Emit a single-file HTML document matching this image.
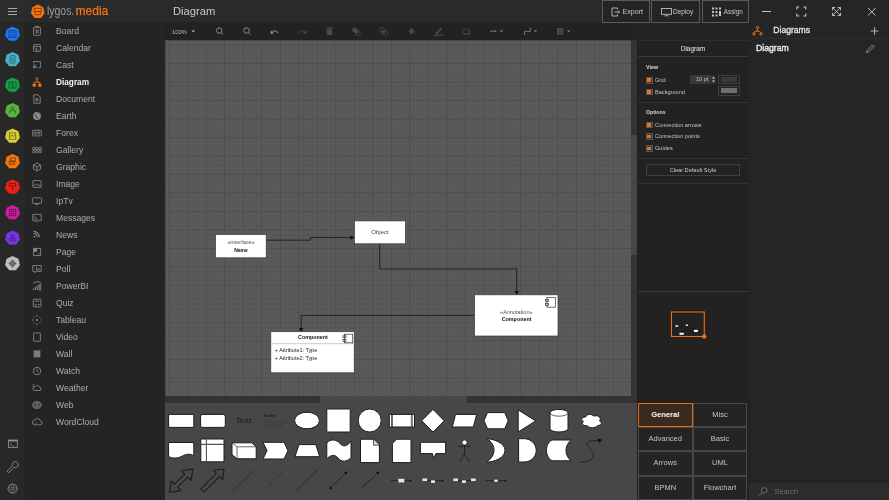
<!DOCTYPE html>
<html><head><meta charset="utf-8">
<style>
*{margin:0;padding:0;box-sizing:border-box}
html{-webkit-font-smoothing:antialiased}
html,body{width:889px;height:500px;overflow:hidden;background:#242424;font-family:"Liberation Sans",sans-serif;color:#bbb}
.a{position:absolute}
#hb{left:0;top:0;width:25px;height:22px;background:#2d2d2d}
#ib{left:0;top:22px;width:25px;height:478px;background:#282828}
#lh{left:25px;top:0;width:140px;height:22px;background:#2a2a2a}
#sb{left:25px;top:22px;width:140px;height:478px;background:#242424}
.logo{font-size:12px;line-height:14px;white-space:nowrap}
.nav{position:absolute;left:56px;font-size:8.6px;color:#adadad;line-height:13px;white-space:nowrap}
.nav.sel{color:#f4f4f4;font-weight:bold;font-size:8.25px}
#title{left:165px;top:0;width:437px;height:22px;background:#2a2a2a}
.title{left:173px;top:4.2px;font-size:11.2px;line-height:14px;color:#cbcbcb}
#tb{left:165px;top:22px;width:466px;height:18px;background:#222}
#canvas{left:165px;top:40px;width:466px;height:356px;background-color:#5a5a5a;
 background-image:linear-gradient(90deg,#4f4f4f 0,#4f4f4f 1px,transparent 1px),linear-gradient(180deg,#4f4f4f 0,#4f4f4f 1px,transparent 1px),linear-gradient(90deg,#565656 0,#565656 1px,transparent 1px),linear-gradient(180deg,#565656 0,#565656 1px,transparent 1px);
 background-size:18.51px 18.51px,18.51px 18.51px,4.6275px 4.6275px,4.6275px 4.6275px;
 background-position:3.9px 4.5px,3.9px 4.5px,3.9px 4.5px,3.9px 4.5px;box-shadow:inset 1px 1px 0 #4a4a4a}
#hscroll{left:165px;top:396px;width:466px;height:7px;background:#333}
#vscroll{left:631px;top:40px;width:7px;height:363px;background:#333}
#pal{left:165px;top:403px;width:473px;height:97px;background:#474747}
#props{left:637px;top:40px;width:112.5px;height:460px;background:#222}
#rp{left:749.5px;top:0;width:139.5px;height:500px;background:#252525}
.tbtn{position:absolute;top:0;height:22.5px;border:1.3px solid #5a5a5a;border-top-width:1px;color:#c8c8c8;line-height:19px;white-space:nowrap}
.pt{position:absolute;font-size:5.6px;line-height:8px;color:#c4c4c4;white-space:nowrap}
.tab{position:absolute;height:24.2px;border:1px solid #474747;background:#242424;font-size:7.5px;line-height:22.2px;text-align:center;color:#c4c4c4}
.ck{width:6.5px;height:6.5px;background:#3a3a3a;border:1px solid #555}
.ck::after{content:"";position:absolute;left:0.45px;top:0.45px;width:3.6px;height:3.6px;background:#f07014}

</style></head><body>
<div id="root" style="position:absolute;left:0;top:0;width:889px;height:500px;overflow:hidden;filter:blur(0.3px)">
<div class="a" id="hb"></div><div class="a" id="ib"></div><div class="a" id="lh"></div><div class="a" id="sb"></div><div class="a" id="title"></div><div class="a" id="tb"></div><div class="a" id="canvas"></div><div class="a" id="hscroll"><div class="a" style="left:155px;top:0;width:147px;height:7px;background:#474747"></div></div><div class="a" id="vscroll"><div class="a" style="left:0;top:95px;width:7px;height:120px;background:#474747"></div></div><div class="a" id="pal"></div><div class="a" id="props"></div><div class="a" id="rp"></div><svg class="a" style="left:0;top:0" width="25" height="500" viewBox="0 0 25 500"><rect x="8" y="8.0" width="9" height="1" fill="#a8a8a8"/><rect x="8" y="11.0" width="9" height="1" fill="#a8a8a8"/><rect x="8" y="14.0" width="9" height="1" fill="#a8a8a8"/><polygon points="12.50,26.40 18.44,29.26 19.91,35.69 15.80,40.85 9.20,40.85 5.09,35.69 6.56,29.26" fill="#2176f5"/><g transform="translate(0 34.0)" stroke="#173c86" fill="#173c86"><rect x="9" y="-3.3" width="7" height="6.6" fill="none" stroke-width="0.9"/><path d="M12.5 -3.3v6.6M10 -1.5h1.2M13.8 -1.5h1.2M10 0.3h1.2M13.8 0.3h1.2M10 2h1.2M13.8 2h1.2" stroke-width="0.7"/></g><polygon points="12.50,51.90 18.44,54.76 19.91,61.19 15.80,66.35 9.20,66.35 5.09,61.19 6.56,54.76" fill="#4cb0c6"/><g transform="translate(0 59.5)" stroke="#24687a" fill="#24687a"><rect x="10" y="-3.8" width="5" height="7.4" rx="1" fill="none" stroke-width="0.9"/><path d="M11.2 -1.6h2.6M11.2 0h2.6M11.2 1.6h2.6" stroke-width="0.7"/></g><polygon points="12.50,77.40 18.44,80.26 19.91,86.69 15.80,91.85 9.20,91.85 5.09,86.69 6.56,80.26" fill="#16a04a"/><g transform="translate(0 85.0)" stroke="#0c5a2a" fill="#0c5a2a"><rect x="9" y="-3" width="3.2" height="6" fill="none" stroke-width="0.9"/><rect x="12.8" y="-3" width="3.2" height="6" fill="none" stroke-width="0.9"/><path d="M10 -1h1.2M13.8 1h1.2" stroke-width="0.8"/></g><polygon points="12.50,102.90 18.44,105.76 19.91,112.19 15.80,117.35 9.20,117.35 5.09,112.19 6.56,105.76" fill="#58b43c"/><g transform="translate(0 110.5)" stroke="#2e6a1e" fill="#2e6a1e"><circle cx="12.5" cy="-2.2" r="1.3" fill="none" stroke-width="0.9"/><path d="M9.5 3v-1.6a3 2 0 0 1 6 0v1.6M9 1h1.5M14.5 1h1.5" fill="none" stroke-width="0.9"/></g><polygon points="12.50,128.40 18.44,131.26 19.91,137.69 15.80,142.85 9.20,142.85 5.09,137.69 6.56,131.26" fill="#d6cf35"/><g transform="translate(0 136.0)" stroke="#6e6a1a" fill="#6e6a1a"><rect x="9.3" y="-3.2" width="6.4" height="6.4" fill="none" stroke-width="0.8"/><path d="M10 1.5l2-2.5 1.5 1.5 2-2.5M10.5 -2l1.5 1.5" fill="none" stroke-width="0.8"/></g><polygon points="12.50,153.90 18.44,156.76 19.91,163.19 15.80,168.35 9.20,168.35 5.09,163.19 6.56,156.76" fill="#f2780f"/><g transform="translate(0 161.5)" stroke="#8a4008" fill="#8a4008"><rect x="10.5" y="-3.5" width="5" height="3.2" fill="none" stroke-width="0.9"/><rect x="9.3" y="-0.5" width="5" height="3.4" fill="none" stroke-width="0.9"/><path d="M10.3 1.2h3" stroke-width="0.7"/></g><polygon points="12.50,179.40 18.44,182.26 19.91,188.69 15.80,193.85 9.20,193.85 5.09,188.69 6.56,182.26" fill="#e8221a"/><g transform="translate(0 187.0)" stroke="#80120e" fill="#80120e"><rect x="9.4" y="-3.6" width="6.2" height="2.6" fill="none" stroke-width="0.9"/><path d="M12.5 -1v4.4" stroke-width="0.9"/></g><polygon points="12.50,204.90 18.44,207.76 19.91,214.19 15.80,219.35 9.20,219.35 5.09,214.19 6.56,207.76" fill="#cc1fa0"/><g transform="translate(0 212.5)" stroke="#6e1058" fill="#6e1058"><rect x="9.3" y="-3.2" width="6.4" height="6.4" fill="none" stroke-width="0.8"/><path d="M9.3 -1h6.4M9.3 1.1h6.4M11.4 -3.2v6.4M13.6 -3.2v6.4" stroke-width="0.6"/></g><polygon points="12.50,230.40 18.44,233.26 19.91,239.69 15.80,244.85 9.20,244.85 5.09,239.69 6.56,233.26" fill="#7436e0"/><g transform="translate(0 238.0)" stroke="#3c1a7a" fill="#3c1a7a"><circle cx="12.5" cy="-2" r="1.4" fill="none" stroke-width="0.8"/><circle cx="10.6" cy="1.6" r="1.4" fill="none" stroke-width="0.8"/><circle cx="14.4" cy="1.6" r="1.4" fill="none" stroke-width="0.8"/></g><polygon points="12.50,255.90 18.44,258.76 19.91,265.19 15.80,270.35 9.20,270.35 5.09,265.19 6.56,258.76" fill="#bdbdbd"/><g transform="translate(0 263.5)" stroke="#5a5a5a" fill="#5a5a5a"><path d="M12.5 -4.2l4.2 4.2-4.2 4.2-4.2-4.2z" stroke="none"/><path d="M12.5 -4.2l4.2 4.2-4.2 4.2-4.2-4.2zM10.4 -2.1l4.2 4.2M14.6 -2.1l-4.2 4.2" fill="none" stroke-width="0.5" stroke="#bdbdbd"/></g><rect x="8.5" y="440" width="8.8" height="7.6" fill="none" stroke="#8e8e8e" stroke-width="0.9"/><rect x="8.5" y="440" width="8.8" height="1.5" fill="#8e8e8e"/><path d="M10.3 443.2l1.5 1.2-1.5 1.2M12.3 446h2" stroke="#8e8e8e" stroke-width="0.8" fill="none"/><path d="M12.4 465.8a3 3 0 1 1 1.6 1.6l-5.3 5.3-1.6-1.6z" fill="none" stroke="#8e8e8e" stroke-width="0.9" stroke-linejoin="round"/><path d="M15.80 487.45 L17.22 487.72 L17.22 489.48 L15.80 489.75 L15.68 490.05 L16.49 491.24 L15.24 492.49 L14.05 491.68 L13.75 491.80 L13.48 493.22 L11.72 493.22 L11.45 491.80 L11.15 491.68 L9.96 492.49 L8.71 491.24 L9.52 490.05 L9.40 489.75 L7.98 489.48 L7.98 487.72 L9.40 487.45 L9.52 487.15 L8.71 485.96 L9.96 484.71 L11.15 485.52 L11.45 485.40 L11.72 483.98 L13.48 483.98 L13.75 485.40 L14.05 485.52 L15.24 484.71 L16.49 485.96 L15.68 487.15z" fill="none" stroke="#8e8e8e" stroke-width="0.9" stroke-linejoin="round"/><circle cx="12.6" cy="488.6" r="1.5" fill="none" stroke="#8e8e8e" stroke-width="0.9"/></svg><svg class="a" style="left:25px;top:0" width="20" height="22" viewBox="25 0 20 22"><polygon points="37.80,4.60 43.27,7.24 44.62,13.16 40.84,17.91 34.76,17.91 30.98,13.16 32.33,7.24" fill="#f07414"/><rect x="34.3" y="8.3" width="7" height="3.2" fill="none" stroke="#8a3d08" stroke-width="0.9"/><rect x="35.3" y="11.5" width="5" height="3.2" fill="none" stroke="#8a3d08" stroke-width="0.9"/></svg><div class="a logo" style="left:46.8px;top:3.5px;transform-origin:0 0;transform:scaleX(0.87);color:#9c9c9c">lygos.</div><div class="a logo" style="left:75.6px;top:3.5px;color:#f07414;-webkit-text-stroke:0.25px #f07414">media</div><div class="nav" style="top:24.5px">Board</div><div class="nav" style="top:41.5px">Calendar</div><div class="nav" style="top:58.5px">Cast</div><div class="nav sel" style="top:75.5px">Diagram</div><div class="nav" style="top:92.5px">Document</div><div class="nav" style="top:109.5px">Earth</div><div class="nav" style="top:126.5px">Forex</div><div class="nav" style="top:143.5px">Gallery</div><div class="nav" style="top:160.5px">Graphic</div><div class="nav" style="top:177.5px">Image</div><div class="nav" style="top:194.5px">IpTv</div><div class="nav" style="top:211.5px">Messages</div><div class="nav" style="top:228.5px">News</div><div class="nav" style="top:245.5px">Page</div><div class="nav" style="top:262.5px">Poll</div><div class="nav" style="top:279.5px">PowerBI</div><div class="nav" style="top:296.5px">Quiz</div><div class="nav" style="top:313.5px">Tableau</div><div class="nav" style="top:330.5px">Video</div><div class="nav" style="top:347.5px">Wall</div><div class="nav" style="top:364.5px">Watch</div><div class="nav" style="top:381.5px">Weather</div><div class="nav" style="top:398.5px">Web</div><div class="nav" style="top:415.5px">WordCloud</div><svg class="a" style="left:25px;top:22px" width="30" height="420" viewBox="25 22 30 420" fill="none" stroke="#8c8c8c" stroke-width="0.85" stroke-linejoin="round"><rect x="33.6" y="27.3" width="6.8" height="8" rx="0.7"/><rect x="35.4" y="29.3" width="3.2" height="4.2" fill="#8c8c8c" stroke="none" opacity="0.6"/><path d="M35.5 27.2v-0.8h3v0.8"/><rect x="33.6" y="44.6" width="6.8" height="6.8" rx="0.7"/><path d="M33.6 46.6h6.8"/><path d="M35 48.5h2M35 50h4" stroke-width="0.7"/><path d="M33.6 63.5v-2h6.8v6.3h-2"/><path d="M33.6 67.8h1.8c0-1-0.8-1.8-1.8-1.8z" fill="#8c8c8c"/><path d="M33.6 64.6c1.8 0 3.2 1.4 3.2 3.2"/><g stroke="#e0701a" stroke-width="1"><path d="M37 77.3l1.3 1.3-1.3 1.3-1.3-1.3z"/><circle cx="34.2" cy="85.2" r="1.4" fill="#e0701a"/><circle cx="39.8" cy="85.2" r="1.4" fill="#e0701a"/><path d="M37 79.9v2.3M34.2 83.8v-1.6h5.6v1.6"/></g><path d="M33.8 94.8h4.2l2.2 2.2v6.2h-6.4z"/><rect x="35.5" y="98" width="2.8" height="3.5" fill="#8c8c8c" stroke="none" opacity="0.7"/><circle cx="37" cy="116" r="3.9" fill="#8c8c8c" stroke="none"/><path d="M34.5 114.5c1 .3 1.8 1 2 2.2s.8 1.5 1.8 1.3" stroke="#242424" stroke-width="0.9"/><path d="M37.5 112.6c.8.6 1.6.6 2.3.4" stroke="#242424" stroke-width="0.8"/><rect x="32.6" y="130.3" width="8.8" height="5.6" rx="0.6"/><circle cx="35.3" cy="133.1" r="1.2"/><circle cx="38.7" cy="133.1" r="1.2"/><rect x="32.8" y="147.4" width="2.4" height="2.1" rx="0.5"/><rect x="32.8" y="150.5" width="2.4" height="2.1" rx="0.5"/><rect x="35.9" y="147.4" width="2.4" height="2.1" rx="0.5"/><rect x="35.9" y="150.5" width="2.4" height="2.1" rx="0.5"/><rect x="39.0" y="147.4" width="2.4" height="2.1" rx="0.5"/><rect x="39.0" y="150.5" width="2.4" height="2.1" rx="0.5"/><path d="M37 163l3.5 2v4l-3.5 2-3.5-2v-4z"/><path d="M33.5 165l3.5 2 3.5-2M37 167v4"/><rect x="32.9" y="180.6" width="8.2" height="6.8" rx="0.6"/><path d="M33.2 186.3l2.3-2.3 1.6 1.6 1.3-1.1 2.5 2.2"/><rect x="32.4" y="197.8" width="9.2" height="5.6" rx="0.8"/><path d="M35.5 204.5h3"/><path d="M32.8 214.4h8.4v6.3h-3.5l-1.2 1.3-1.2-1.3h-2.5z"/><path d="M35 216.3v2.8h3" stroke-width="0.8"/><path d="M33.6 231.4a5.8 5.8 0 0 1 5.8 5.8M33.6 233.6a3.6 3.6 0 0 1 3.6 3.6" stroke-width="1.1"/><circle cx="34.4" cy="236.6" r="0.9" fill="#8c8c8c" stroke="none"/><rect x="33.6" y="248.4" width="7" height="7.2" fill="none"/><rect x="33.6" y="248.4" width="3.3" height="3.4" fill="#8c8c8c" stroke="none"/><path d="M38 254.6l2-2" /><path d="M32.8 265.6h8.4v5.8h-5l-1.2 1.3v-1.3h-2.2z"/><path d="M36.5 267v3h2.5v-2" stroke-width="0.9"/><path d="M33 283.5l2-1.5h4.5l1.2 1.4v6.8h-1.5"/><path d="M33.5 288.5v1.5M35.3 287v3M37.2 285.5v4.5M39.2 284.3v5.7" stroke-width="1.1"/><rect x="33.3" y="299.2" width="7.6" height="7.6" rx="0.4"/><path d="M34.8 301.2h4.5M34.8 304.6h1.2v1.2M37.5 304.6h2.2"/><g fill="#8c8c8c" stroke="none"><circle cx="37" cy="320" r="1.1"/><circle cx="37" cy="315.8" r="0.7"/><circle cx="37" cy="324.2" r="0.7"/><circle cx="32.8" cy="320" r="0.7"/><circle cx="41.2" cy="320" r="0.7"/><circle cx="34" cy="317" r="0.6"/><circle cx="40" cy="317" r="0.6"/><circle cx="34" cy="323" r="0.6"/><circle cx="40" cy="323" r="0.6"/></g><rect x="33.6" y="333" width="6.8" height="8.2" rx="0.4"/><rect x="33.6" y="350.4" width="6.8" height="7" fill="#8c8c8c" stroke="none" opacity="0.85"/><circle cx="37" cy="371" r="3.7"/><path d="M37 368.9v2.1l1.4 1.2" stroke-width="0.8"/><path d="M34.5 390.5h5a1.6 1.6 0 0 0 0-3.2 2.3 2.3 0 0 0-4.2-.6 1.9 1.9 0 0 0-.8 3.8z"/><path d="M33 386.6a1.8 1.8 0 0 1 1.8-2.4"/><ellipse cx="37" cy="405" rx="4.2" ry="3.3"/><path d="M32.8 405h8.4M33.6 403.2h6.8M33.6 406.8h6.8M37 401.7v6.6" stroke-width="0.7"/><path d="M34.2 424.8h5.6a2 2 0 0 0 .3-4 2.8 2.8 0 0 0-5.3-.7 2.4 2.4 0 0 0-.6 4.7z"/><path d="M35.5 423.5l1.5-1.3" stroke-width="0.7"/></svg><div class="a title">Diagram</div><div class="tbtn" style="left:602px;width:48px"><svg class="a" style="left:7.5px;top:6.2px" width="10" height="10" viewBox="0 0 10 10" fill="none" stroke="#bdbdbd" stroke-width="0.9"><path d="M6.5 2.5V1H1v8h5.5V7.5"/><path d="M3.5 5h5M7 3.5L8.5 5 7 6.5"/></svg><span class="a" style="left:19.5px;top:2px;font-size:7.1px">Export</span></div>
<div class="tbtn" style="left:651px;width:49px"><svg class="a" style="left:8.5px;top:7.2px" width="11" height="9" viewBox="0 0 11 9" fill="none" stroke="#bdbdbd" stroke-width="0.9"><rect x="0.5" y="0.5" width="10" height="5.8"/><path d="M3.5 7.8h4"/></svg><span class="a" style="left:21px;top:1.2px;font-size:6.5px">Deploy</span></div>
<div class="tbtn" style="left:702px;width:47px"><svg class="a" style="left:8.5px;top:6px" width="11" height="11" viewBox="0 0 11 11" fill="#c4c4c4"><rect x="0" y="0.5" width="2" height="2"/><rect x="3.5" y="0.5" width="2" height="2"/><rect x="7" y="0.5" width="2" height="2"/><rect x="0" y="4" width="2" height="2"/><rect x="3.5" y="4" width="2" height="2"/><rect x="7" y="4" width="2" height="5"/><rect x="0" y="7.5" width="2" height="2"/><rect x="3.5" y="7.5" width="2" height="2"/></svg><span class="a" style="left:20.8px;top:1.2px;font-size:6.3px">Assign</span></div>
<div class="a" style="left:172px;top:28.2px;font-size:5.8px;line-height:8px;color:#bdbdbd">100%</div>
<svg class="a" style="left:165px;top:22px" width="466" height="18" viewBox="165 22 466 18" fill="none" stroke="#9a9a9a" stroke-width="1">
<path d="M191.5 30.5h3.5l-1.75 2z" fill="#bdbdbd" stroke="none"/>
<circle cx="219.2" cy="30.6" r="2.7" stroke="#8c8c8c"/><path d="M221.2 32.6l1.8 1.8" stroke="#8c8c8c"/>
<circle cx="246.6" cy="30.6" r="2.7" stroke="#8c8c8c"/><path d="M248.6 32.6l1.8 1.8" stroke="#8c8c8c"/>
<path d="M272.5 31.5a3.2 2.6 0 0 1 5.3 1.6" stroke="#a0a0a0" stroke-width="1"/><path d="M270.6 30.4l3.4 2.8-3.4 0.6z" fill="#a0a0a0" stroke="none"/>
<path d="M304.3 31.5a3.2 2.6 0 0 0 -5.3 1.6" stroke="#4c4c4c" stroke-width="1"/><path d="M306.2 30.4l-3.4 2.8 3.4 0.6z" fill="#4c4c4c" stroke="none"/>
<g fill="#4a4a4a" stroke="none"><rect x="326.8" y="29.2" width="5.4" height="5.8" rx="0.5"/><rect x="326" y="27.8" width="7" height="1"/><rect x="328.3" y="27.2" width="2.4" height="0.8"/>
<rect x="352.6" y="27.8" width="4.2" height="4.2" rx="0.6"/><rect x="355.6" y="30.8" width="4.4" height="4.4" rx="0.6" fill="none" stroke="#4a4a4a" stroke-width="0.8"/><rect x="354.6" y="29.8" width="3.4" height="3.4"/>
<rect x="380" y="27.8" width="4.2" height="4.2" rx="0.6" fill="none" stroke="#4a4a4a" stroke-width="0.8"/><rect x="383.3" y="31" width="4.4" height="4.2" rx="0.6" fill="none" stroke="#4a4a4a" stroke-width="0.8"/><rect x="382" y="30" width="3" height="3"/>
<path d="M408.3 31.2l3.2-3.2 3.2 3.2-3.2 3.2z"/><circle cx="414.8" cy="33.6" r="0.7"/><rect x="434" y="34.7" width="9.5" height="1.2"/><path d="M435.5 33.2l5.5-5.5 1.4 1.4-5.5 5.5h-1.4z"/>
<rect x="462.8" y="29.2" width="6.6" height="4.6" rx="0.8" fill="none" stroke="#4a4a4a" stroke-width="0.9"/><path d="M464 34.3h5.9v-4.2" fill="none" stroke="#4a4a4a" stroke-width="0.7"/></g>
<path d="M490 31.2h5" stroke="#7a7a7a" stroke-width="0.9"/><path d="M494.6 29.8l2.2 1.4-2.2 1.4z" fill="#7a7a7a" stroke="none"/><path d="M499.8 30.4h3.4l-1.7 1.9z" fill="#8a8a8a" stroke="none"/>
<path d="M524.6 34v-2.6h5.8v-2.8" stroke="#7a7a7a" stroke-width="0.9"/><rect x="523.9" y="33.6" width="1.4" height="1.2" fill="#7a7a7a" stroke="none"/><circle cx="530.4" cy="28.6" r="0.7" fill="#7a7a7a" stroke="none"/><path d="M533.8 30.4h3.4l-1.7 1.9z" fill="#8a8a8a" stroke="none"/>
<rect x="557" y="28.2" width="6.2" height="6.4" rx="0.6" fill="#575757" stroke="none"/><path d="M557 30.3h6.2M557 32.4h6.2M559.1 28.2v6.4M561.2 28.2v6.4" stroke="#2a2a2a" stroke-width="0.45"/><path d="M567 30.4h3.4l-1.7 1.9z" fill="#8a8a8a" stroke="none"/>
</svg>
<svg class="a" style="left:165px;top:40px" width="466" height="356" viewBox="165 40 466 356">
<g fill="none" stroke="#1e1e1e" stroke-width="0.9">
<path d="M266 240.2H310.4V237.5H351"/>
<path d="M379.7 243.8V269H516.7V292"/>
<path d="M474.6 315.4H301.2V329"/>
</g>
<g fill="#111">
<path d="M354.3 237.5l-4 -2.2v4.4z"/>
<path d="M516.7 295l-2.2 -4h4.4z"/>
<path d="M301.2 332l-2.2 -4h4.4z"/>
</g>
<g stroke="#3a3a3a" stroke-width="0.7" fill="#fff">
<rect x="215.5" y="234.5" width="50.7" height="23.3"/>
<rect x="354.5" y="220.9" width="50.9" height="22.9"/>
<rect x="474.6" y="294.8" width="83.4" height="41.2"/>
<rect x="270.8" y="331.7" width="83.4" height="41.1"/>
</g>
<path d="M270.8 343.7H354.2" stroke="#bbb" stroke-width="0.8"/>
<g fill="none" stroke="#333" stroke-width="0.7">
<rect x="547" y="297.5" width="8.3" height="9.7"/><rect x="545.5" y="299.3" width="3" height="2"/><rect x="545.5" y="303.3" width="3" height="2"/>
<rect x="344.5" y="334.2" width="8.2" height="8.6"/><rect x="343" y="335.8" width="3" height="1.8"/><rect x="343" y="339.5" width="3" height="1.8"/>
</g>
<g font-family="Liberation Sans" text-anchor="middle">
<text x="241" y="244.4" font-size="5.6" fill="#555">«interface»</text>
<text x="241" y="251.6" font-size="5" fill="#111" font-weight="bold">Name</text>
<text x="380" y="234.2" font-size="6" fill="#444">Object</text>
<text x="516.3" y="313.7" font-size="5.5" fill="#555">«Annotation»</text>
<text x="516.6" y="320.9" font-size="5.35" fill="#111" font-weight="bold">Component</text>
<text x="313" y="339.1" font-size="5.36" fill="#111" font-weight="bold">Component</text>
</g>
<g font-family="Liberation Sans" font-size="5.44" fill="#222">
<text x="274.8" y="352.2">+ Attribute1: Type</text>
<text x="274.8" y="359.5">+ Attribute2: Type</text>
</g>
</svg>
<svg class="a" style="left:165px;top:403px" width="471" height="97" viewBox="165 403 471 97">
<g fill="#fff" stroke="#1c1c1c" stroke-width="1" stroke-linejoin="round">
<rect x="168.6" y="414.4" width="25.2" height="13"/>
<rect x="200.6" y="414.4" width="24.7" height="13" rx="2"/>
<ellipse cx="307" cy="420.5" rx="12.4" ry="8.3"/>
<rect x="326.8" y="409" width="23.4" height="23" rx="0.5"/>
<circle cx="369.7" cy="420.5" r="11.5"/>
<rect x="389.3" y="414.4" width="25.2" height="12.6"/>
<path d="M433 409.4L444.2 420.7 433 432 421.7 420.7z"/>
<path d="M455.5 414.4H476.6L473.4 427H452.3z"/>
<path d="M487.5 412.6H504.7L508.2 420.7 504.7 428.8H487.5L484 420.7z"/>
<path d="M518.2 409.9L535.7 420.9 518.2 432z"/>
<path d="M550 412.8a9 3.4 0 0 1 18 0V428.6a9 3.4 0 0 1 -18 0z"/>
<path d="M 585.70 416.88 C 581.30 416.88 580.20 420.75 583.72 421.52 C 580.20 423.23 584.16 426.95 587.02 425.40 C 589.00 428.50 595.60 428.50 597.80 425.40 C 602.20 425.40 602.20 422.30 599.45 420.75 C 602.20 417.65 597.80 414.55 593.95 416.10 C 591.20 413.77 586.80 413.77 585.70 416.88 Z" stroke-width="1"/>
<path d="M168.6 442.5H193.8V455.8C190 453.5 186.5 453.8 182 456.2C177.5 458.6 172 458.6 168.6 456.4z"/>
<rect x="200.8" y="439" width="23.2" height="22.8"/>
<path d="M232 442.8H251.8L256.2 446.8V458.8H237L232 454.6z"/>
<path d="M263 442.3H284L288 450.6 284 459H263L267 450.6z"/>
<path d="M299 444.6H315.8L319.8 456.7H295z"/>
<path d="M326.8 443C331 438 337 440 340 443.5C343 447 347 447 351 441V457.5C347 462.5 341 462 338 458C335 454 330 455 326.8 459z"/>
<path d="M360.5 439.2H373.5L379.4 445V462.6H360.5z"/>
<path d="M396.5 439.2H411V462.6H392.4V443.5z"/>
<path d="M420.4 442.3H445.6V453.6H436L433.4 458.5 432.5 453.6H420.4z"/>
<path d="M487 438.7C494 439 505 443 505 450.4 505 458 494 462 487 462 492 458 494 454 494 450.4 494 446 492 442 487 438.7z"/>
<path d="M518.6 438.7H524C531 438.7 536.2 444 536.2 450.4 536.2 456.8 531 462 524 462H518.6z"/>
<path d="M552 440H570.8C567 444 566 447.5 566 450.4 566 453.5 567 457 570.8 460.8H552C548 458 546.5 454.5 546.5 450.4 546.5 446 548 442 552 440z"/>
<path d="M169.40 492.40 L171.24 480.80 L174.63 484.20 L184.67 474.16 L181.28 470.76 L192.88 468.92 L191.04 480.52 L187.64 477.13 L177.60 487.17 L181.00 490.56z" fill="none" stroke="#1e1e1e" stroke-width="1.15"/>
<path d="M200.91 488.91 L216.47 473.35 L213.39 470.27 L224.00 469.00 L222.73 479.61 L219.65 476.53 L204.09 492.09z" fill="none" stroke="#1e1e1e" stroke-width="1.15"/>
</g>
<g fill="none" stroke="#262626" stroke-width="0.7">
<path d="M550 412.8a9 3.4 0 0 0 18 0"/>
<path d="M168.6 414.4" />
<path d="M201 444.4H224M206.4 439V461.8" stroke="#555" stroke-width="1.1"/>
<path d="M232 442.8L237 446.8H256.2M237 446.8V458.8"/>
<path d="M373.5 439.2V445H379.4"/>
<path d="M391.5 414.4V427M412.3 414.4V427M392.5 414.4V427M411.3 414.4V427"/>
</g>
<path d="M373.5 439.5V445H379" fill="#ddd" stroke="#262626" stroke-width="0.6"/>
<g fill="none" stroke="#1a1a1a" stroke-width="0.8">
<circle cx="464.5" cy="442.5" r="2.6" fill="#fff"/>
<path d="M464.5 445.1V454L459.5 462M464.5 454L469.5 462M458.6 446.4H470.3"/>
<path d="M580 462.4C588 462 595.5 459 593 453.5C590.5 448 584.5 444 588 441.8C590.5 440.3 594 440.5 598 440.6"/>
<path d="M232.5 491.5L255 469.4" stroke-dasharray="1.3 1.3" stroke-width="0.9"/>
<path d="M263.6 491.5L284.7 469.4" stroke-dasharray="0.8 1.4" stroke-width="0.9"/>
<path d="M295.5 491.5L318 469.4"/>
<path d="M330.5 488L346 472.8"/>
<path d="M361.5 488L378 472.8"/>
<path d="M390.9 480.7H410.5"/><path d="M422.4 480.7H442.5"/><path d="M453.2 480.7H474"/><path d="M485.4 480.7H505"/>
</g>
<g fill="#111">
<path d="M602.5 439.8L597.5 438.5 599 443z"/>
<path d="M329 489.5l1 -3.3 2.3 2.3z M347.4 471.3l-1 3.3 -2.3 -2.3z"/>
<path d="M379.4 471.3l-1 3.3 -2.3 -2.3z"/>
<path d="M412.2 480.7l-2.2 -1.3v2.6z"/><path d="M444.2 480.7l-2.2 -1.3v2.6z"/><path d="M475.7 480.7l-2.2 -1.3v2.6z"/><path d="M506.7 480.7l-2.2 -1.3v2.6z"/>
</g>
<g fill="#e8e8e8">
<rect x="398.3" y="478.8" width="6" height="3.6"/>
<rect x="422.4" y="478.5" width="4.8" height="2.6"/><rect x="431" y="480.3" width="4" height="2.6"/>
<rect x="453.2" y="478.5" width="4.8" height="2.6"/><rect x="462" y="480.3" width="4" height="2.6"/><rect x="471" y="478.5" width="4.7" height="2.6"/>
<ellipse cx="496" cy="480.7" rx="2" ry="1.3"/>
</g>
<text x="243.7" y="422.8" font-family="Liberation Sans" font-size="7.9" font-weight="bold" fill="#222" text-anchor="middle">Text</text>
<text x="263.8" y="417.3" font-family="Liberation Sans" font-size="3.1" font-weight="bold" fill="#202020">Heading</text>
<g stroke="#383838" stroke-width="0.5" stroke-dasharray="2.6 0.7 1.8 0.7 3 0.7"><path d="M263.8 421H282M263.8 422.8H287M263.8 424.6H283M263.8 426.3H284"/></g>
</svg>
<div class="a" style="left:637px;top:40px;width:1px;height:363px;background:#1c1c1c"></div>
<div class="a" style="left:638px;top:40px;width:111px;height:1px;background:#2e2e2e"></div>
<div class="a" style="left:638px;top:44.8px;width:110px;text-align:center;font-size:6.5px;line-height:8px;color:#cccccc;-webkit-text-stroke:0.15px #ccc">Diagram</div>
<div class="a" style="left:638px;top:56px;width:110.5px;height:1px;background:#3a3a3a"></div>
<div class="pt" style="left:646px;top:63px;font-weight:bold;color:#d8d8d8;font-size:5.4px">View</div>
<div class="a ck" style="left:646px;top:77px"></div><div class="pt" style="left:655px;top:76px">Grid</div>
<div class="a ck" style="left:646px;top:88.7px"></div><div class="pt" style="left:655px;top:87.7px">Background</div>
<div class="a" style="left:690px;top:74.8px;width:26px;height:8.8px;background:#3a3a3a"></div>
<div class="pt" style="left:696px;top:75.2px;font-size:5.5px">10 pt</div>
<div class="a" style="left:710.6px;top:74.8px;width:5px;height:8.8px;background:#2e2e2e"></div><svg class="a" style="left:710.6px;top:75px" width="5" height="9" viewBox="0 0 5 9" fill="#d0d0d0"><path d="M1 3.5L2.5 1.5 4 3.5z M1 5.5L2.5 7.5 4 5.5z"/></svg>
<div class="a" style="left:718px;top:74.8px;width:21.6px;height:9.4px;border:1px solid #3d3d3d;background:#242424"><div class="a" style="left:1.5px;top:1.5px;width:16.6px;height:4.4px;background:#3a3a3a"></div></div>
<div class="a" style="left:718px;top:85.8px;width:21.6px;height:9.8px;border:1px solid #3d3d3d;background:#242424"><div class="a" style="left:1.5px;top:1.5px;width:16.6px;height:4.8px;background:#6e6e6e"></div></div>
<div class="a" style="left:638px;top:102px;width:110.5px;height:1px;background:#333"></div>
<div class="pt" style="left:646px;top:107.7px;font-weight:bold;color:#d8d8d8;font-size:5.2px">Options</div>
<div class="a ck" style="left:646px;top:121.7px"></div><div class="pt" style="left:655px;top:120.7px">Connection arrows</div>
<div class="a ck" style="left:646px;top:133.4px"></div><div class="pt" style="left:655px;top:132.4px">Connection points</div>
<div class="a ck" style="left:646px;top:145.1px"></div><div class="pt" style="left:655px;top:144.1px">Guides</div>
<div class="a" style="left:638px;top:158px;width:110.5px;height:1px;background:#333"></div>
<div class="a" style="left:646px;top:164px;width:94px;height:12.4px;border:1px solid #3f3f3f;font-size:5.6px;line-height:10.4px;text-align:center;color:#cdcdcd">Clear Default Style</div>
<div class="a" style="left:638px;top:183px;width:110.5px;height:1px;background:#333"></div>
<div class="a" style="left:638px;top:290.5px;width:110.5px;height:1px;background:#3a3a3a"></div>
<svg class="a" style="left:665px;top:305px" width="45" height="36" viewBox="665 305 45 36">
<rect x="671.5" y="312" width="32.8" height="24.5" fill="none" stroke="#e8701a" stroke-width="1.1"/>
<circle cx="704.3" cy="336.5" r="2.2" fill="#e8701a"/>
<g fill="#fff"><rect x="675.3" y="325.2" width="3" height="1.6" rx="0.6"/><rect x="685.6" y="324.4" width="2.4" height="1.5" rx="0.6"/><rect x="693.8" y="329.8" width="4.2" height="2.1" rx="0.8"/><rect x="679.3" y="332.7" width="4.6" height="2.1" rx="0.8"/></g>
<path d="M678.3 325.9H685.6M686.8 325.9V328.5H695.9V329.8M693.8 330.8H681.6V332.7" stroke="#111" stroke-width="0.4" fill="none"/>
</svg>
<div class="tab" style="left:637.5px;top:403px;width:55.5px;background:#3b2a1d;border-color:#e0701e;color:#f2f2f2;font-weight:bold">General</div>
<div class="tab" style="left:693px;top:403px;width:54px">Misc</div>
<div class="tab" style="left:637.5px;top:427.2px;width:55.5px">Advanced</div>
<div class="tab" style="left:693px;top:427.2px;width:54px">Basic</div>
<div class="tab" style="left:637.5px;top:451.4px;width:55.5px">Arrows</div>
<div class="tab" style="left:693px;top:451.4px;width:54px">UML</div>
<div class="tab" style="left:637.5px;top:475.6px;width:55.5px">BPMN</div>
<div class="tab" style="left:693px;top:475.6px;width:54px">Flowchart</div>
<svg class="a" style="left:749px;top:0" width="140" height="60" viewBox="749 0 140 60" fill="none" stroke="#c4c4c4" stroke-width="1">
<path d="M762 11.5h9"/>
<path d="M796.8 9.5v-2.5h2.5M803.3 7h2.5v2.5M805.8 13.5v2.5h-2.5M799.3 16h-2.5v-2.5" stroke-width="1.1"/>
<path d="M832.5 7.5l8 8M840.5 7.5l-8 8M832.5 10.3v-2.8h2.8M837.7 7.5h2.8v2.8M840.5 12.7v2.8h-2.8M835.3 15.5h-2.8v-2.8" stroke-width="0.9"/>
<path d="M868 8l7.5 7.5M875.5 8l-7.5 7.5"/>
<path d="M870.7 31h7.8M874.6 27.1v7.8" stroke-width="0.9"/>
<path d="M867 50.5l5.5-5.5 1.5 1.5-5.5 5.5-2 .5z" stroke-width="0.8" stroke="#aaa"/>
<g stroke="#e0701a" stroke-width="1"><circle cx="757.5" cy="27.5" r="1.2"/><path d="M757.5 28.7v2.5M754 33.5c0-2 1-2.3 3.5-2.3s3.5.3 3.5 2.3"/><circle cx="754" cy="34" r="1.2"/><circle cx="761" cy="34" r="1.2"/></g>
</svg>
<div class="a" style="left:749px;top:37.8px;width:140px;height:1px;background:#2e2e2e"></div>
<div class="a" style="left:773.3px;top:25.4px;font-size:8.6px;line-height:11px;color:#e6e6e6;-webkit-text-stroke:0.3px #e6e6e6">Diagrams</div>
<div class="a" style="left:756px;top:42.8px;font-size:8.7px;line-height:11px;color:#ededed;-webkit-text-stroke:0.35px #ededed">Diagram</div>
<div class="a" style="left:749px;top:482.6px;width:140px;height:17.4px;background:#2c2c2c"></div>
<svg class="a" style="left:755px;top:484px" width="14" height="14" viewBox="755 484 14 14" fill="none" stroke="#777" stroke-width="0.9"><circle cx="764.3" cy="490.4" r="2.8"/><path d="M762.3 492.4l-3.3 3.3"/></svg>
<div class="a" style="left:774.4px;top:486.5px;font-size:7.5px;line-height:10px;color:#6e6e6e">Search</div>

</div></body></html>
